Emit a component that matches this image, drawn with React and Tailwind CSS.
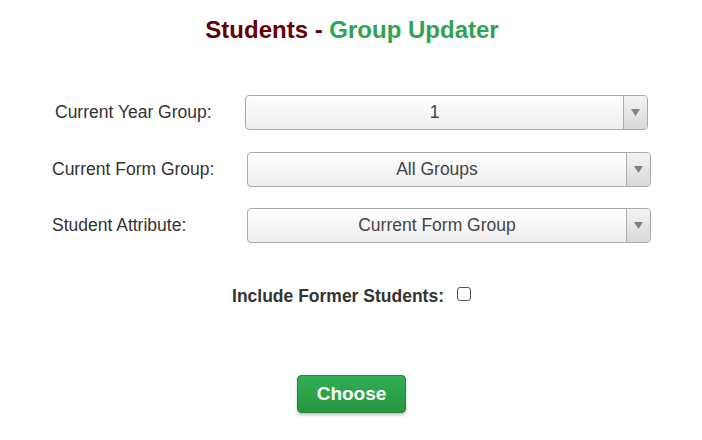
export default function App() {
    const rows = [
        { label: 'Current Year Group:', value: '1', labelPad: 'pl-[55px]', selectPad: 'ml-[245px]', w: 'w-[403px]' },
        { label: 'Current Form Group:', value: 'All Groups', labelPad: 'pl-[52px]', selectPad: 'ml-[247px]', w: 'w-[404px]' },
        { label: 'Student Attribute:', value: 'Current Form Group', labelPad: 'pl-[52px]', selectPad: 'ml-[247px]', w: 'w-[404px]' },
    ];

    return (
        <div className="w-[702px] h-[440px] bg-white font-['Liberation_Sans',Arial,sans-serif] text-[#333]">
            {/* Title */}
            <h1 className="pt-[15px] text-center text-[24px] font-bold leading-[30px] pl-[2px]">
                <span className="text-[#630000]">Students - </span>
                <span className="text-[#2fa352]">Group Updater</span>
            </h1>

            {/* Select rows */}
            <div className="mt-[50px] flex flex-col">
                {rows.map((row, i) => (
                    <div key={row.label} className={`relative h-[35px] flex items-center ${i === 0 ? '' : i === 1 ? 'mt-[22px]' : 'mt-[21px]'}`}>
                        <span className={`absolute left-0 ${row.labelPad} text-[17.5px] leading-[20px] text-[#333] -mt-[2px]`}>
                            {row.label}
                        </span>
                        <div
                            className={`${row.selectPad} ${row.w} h-[35px] flex rounded-[4px] border border-[#aaa] bg-gradient-to-b from-white to-[#eee] overflow-hidden`}
                        >
                            <div className="flex-1 flex items-center justify-center text-[17.5px] text-[#444]">
                                {row.value}
                            </div>
                            <div className="w-[24px] border-l border-[#aaa] bg-gradient-to-b from-[#f4f4f4] to-[#d8d8d8] flex items-center justify-center">
                                <svg width="9" height="7" viewBox="0 0 9 7">
                                    <path d="M0 0 L9 0 L4.5 7 Z" fill="#808080" />
                                </svg>
                            </div>
                        </div>
                    </div>
                ))}
            </div>

            {/* Include former */}
            <div className="mt-[40px] flex items-center justify-center">
                <span className="text-[17.5px] font-bold text-[#333] ml-[1px]">Include Former Students:</span>
                <span className="ml-[13px] w-[14px] h-[14px] rounded-[3px] border border-[#555] bg-white -mt-[4px]" />
            </div>

            {/* Button */}
            <div className="mt-[66px] flex justify-center pl-[1px]">
                <button className="w-[109px] h-[38px] rounded-[4px] bg-gradient-to-b from-[#31ad56] to-[#27963f] border border-[#23883a] text-white text-[19px] font-bold shadow-[0_2px_3px_rgba(0,0,0,0.25)]">
                    Choose
                </button>
            </div>
        </div>
    );
}
